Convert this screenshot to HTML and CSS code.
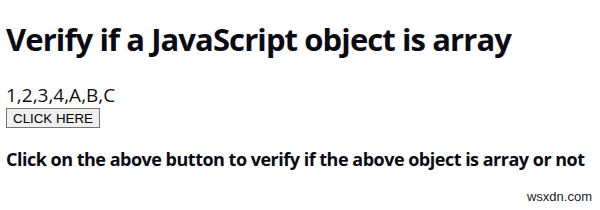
FILE: index.html
```html
<!DOCTYPE html>
<html>
<head>
<meta charset="utf-8">
<link rel="stylesheet" href="styles.css">
</head>
<body>
<h1 class="title">Verify if a JavaScript object is array</h1>
<div class="sample">1,2,3,4,A,B,C</div>
<button class="btn">CLICK HERE</button>
<h3 class="result">Click on the above button to verify if the above object is array or not</h3>
<div class="mark">wsxdn.com</div>
</body>
</html>
```
FILE: styles.css
```css
html, body {
  margin: 0;
  padding: 0;
  background: #fff;
}
body {
  padding: 0 6px;
  font-family: "Open Sans", "DejaVu Sans", sans-serif;
  color: #000;
  position: relative;
  height: 210px;
  overflow: hidden;
}
.title {
  font-size: 31px;
  font-weight: 700;
  letter-spacing: -0.9px;
  line-height: 38px;
  margin: 20px 0 0 0;
  color: #0a0a14;
}
.sample {
  font-size: 19px;
  line-height: 22px;
  margin-top: 26px;
  color: #111;
}
.btn {
  display: block;
  margin: 2px 0 0 0;
  padding: 1px 6px;
  height: 20px;
  font-family: "Liberation Sans", Arial, sans-serif;
  font-size: 13.33px;
  color: #000;
  background: #efefef;
  border: 1px solid #767676;
  border-radius: 0;
}
.result {
  font-size: 18px;
  font-weight: 700;
  letter-spacing: -0.5px;
  line-height: 24px;
  margin: 19px 0 0 0;
  color: #0a0a14;
  white-space: nowrap;
}
.mark {
  position: absolute;
  right: 8px;
  bottom: 6px;
  font-family: "Liberation Sans", Arial, sans-serif;
  font-size: 13px;
  color: #222;
}
```
